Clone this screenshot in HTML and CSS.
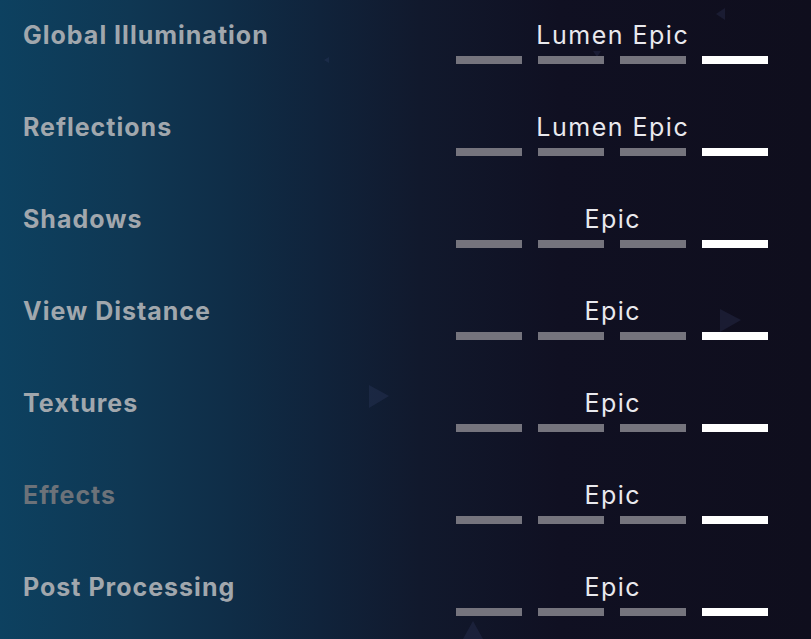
FILE: index.html
```html
<!DOCTYPE html>
<html lang="en">
<head>
<meta charset="utf-8">
<title>Graphics Settings</title>
<link rel="stylesheet" href="styles.css">
</head>
<body>
<div class="screen">
  <svg class="deco" width="811" height="639" viewBox="0 0 811 639" aria-hidden="true">
    <polygon points="725,8 725,20 716,14" class="tri"/>
    <polygon points="329,57 329,63 324,60" class="tri"/>
    <polygon points="369,385 369,408 389,396" class="tri"/>
    <polygon points="720,309 720,332 741,320" class="tri"/>
    <polygon points="463,639 483,639 473,621" class="tri"/>
    <polygon points="593,51 601,51 597,57" class="tri"/>
  </svg>
  <div class="list">
    <div class="row">
      <div class="label">Global Illumination</div>
      <div class="control">
        <div class="value">Lumen Epic</div>
        <div class="bars"><span class="bar"></span><span class="bar"></span><span class="bar"></span><span class="bar on"></span></div>
      </div>
    </div>
    <div class="row">
      <div class="label">Reflections</div>
      <div class="control">
        <div class="value">Lumen Epic</div>
        <div class="bars"><span class="bar"></span><span class="bar"></span><span class="bar"></span><span class="bar on"></span></div>
      </div>
    </div>
    <div class="row">
      <div class="label">Shadows</div>
      <div class="control">
        <div class="value">Epic</div>
        <div class="bars"><span class="bar"></span><span class="bar"></span><span class="bar"></span><span class="bar on"></span></div>
      </div>
    </div>
    <div class="row">
      <div class="label">View Distance</div>
      <div class="control">
        <div class="value">Epic</div>
        <div class="bars"><span class="bar"></span><span class="bar"></span><span class="bar"></span><span class="bar on"></span></div>
      </div>
    </div>
    <div class="row">
      <div class="label">Textures</div>
      <div class="control">
        <div class="value">Epic</div>
        <div class="bars"><span class="bar"></span><span class="bar"></span><span class="bar"></span><span class="bar on"></span></div>
      </div>
    </div>
    <div class="row">
      <div class="label dim">Effects</div>
      <div class="control">
        <div class="value">Epic</div>
        <div class="bars"><span class="bar"></span><span class="bar"></span><span class="bar"></span><span class="bar on"></span></div>
      </div>
    </div>
    <div class="row">
      <div class="label">Post Processing</div>
      <div class="control">
        <div class="value">Epic</div>
        <div class="bars"><span class="bar"></span><span class="bar"></span><span class="bar"></span><span class="bar on"></span></div>
      </div>
    </div>
  </div>
</div>
</body>
</html>
```

FILE: styles.css
```css
html, body {
  margin: 0;
  padding: 0;
  background: #0f0e1d;
}

.screen {
  position: relative;
  width: 811px;
  height: 639px;
  overflow: hidden;
  background:
    linear-gradient(90deg, #0d4160 0px, #0f3753 130px, #0f2d47 230px, #10233b 320px, #11192d 420px, #101022 560px, #0f0e1d 811px);
  font-family: Inter, "Noto Sans", sans-serif;
}

.deco {
  position: absolute;
  left: 0;
  top: 0;
}

.tri {
  fill: rgba(70, 80, 130, 0.2);
}

.list {
  position: relative;
  display: flex;
  flex-direction: column;
  padding-left: 23px;
}

.row {
  display: flex;
  align-items: flex-start;
  height: 92px;
  padding-top: 21px;
  box-sizing: border-box;
}

.label {
  flex: 1;
  font-size: 25px;
  line-height: 28px;
  font-weight: 700;
  letter-spacing: 1px;
  color: #a1a7ad;
}

.label.dim {
  color: #6c7279;
}

.control {
  width: 312px;
  margin-right: 43px;
  display: flex;
  flex-direction: column;
  align-items: center;
}

.value {
  font-size: 25px;
  line-height: 28px;
  font-weight: 400;
  letter-spacing: 1.5px;
  color: #e9e9ee;
  padding-left: 1.5px;
}

.bars {
  display: flex;
  gap: 16px;
  margin-top: 7px;
}

.bar {
  display: block;
  width: 66px;
  height: 8px;
  background: #75747d;
}

.bar.on {
  background: #ffffff;
}
```
